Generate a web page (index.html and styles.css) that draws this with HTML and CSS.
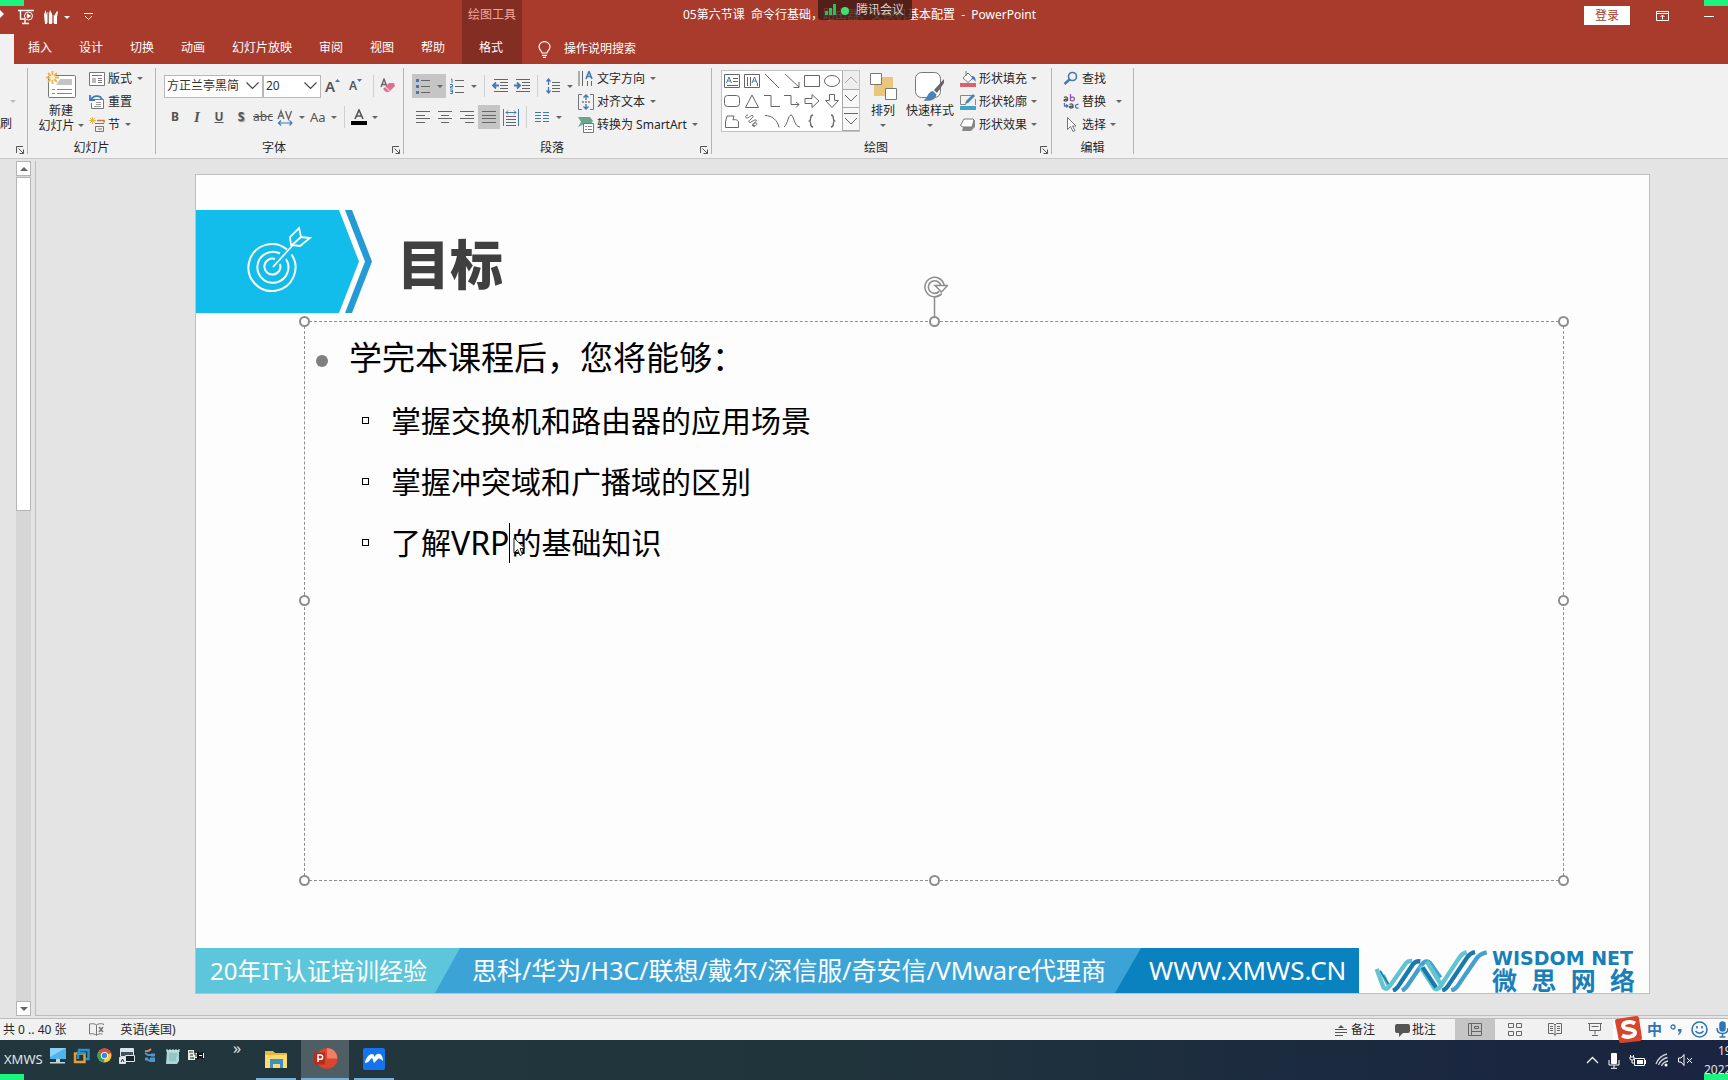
FILE: index.html
```html
<!DOCTYPE html>
<html lang="zh-CN">
<head>
<meta charset="utf-8">
<title>05第六节课 - PowerPoint</title>
<link rel="stylesheet" href="styles.css">
</head>
<body>
<i class="mark tl"></i><i class="mark tr"></i><i class="mark bl"></i><i class="mark br"></i>

<header class="header">
  <div class="head-left">
    <div class="quick">
      <svg width="5" height="12" viewBox="0 0 5 12"><path d="M0 2l4 4-4 4z" fill="#fff"/></svg>
      <button class="q-show" aria-label="从头开始"><svg width="18" height="16" viewBox="0 0 18 16" fill="none" stroke="#fff"><path d="M1 1.500h16M3.500 2v8h5M5 14.500h7M8 11v3" stroke-width="1.400"/><circle cx="11.500" cy="7" r="4"/><path d="M10.300 5l3.200 2-3.200 2z" fill="#fff"/></svg></button>
      <button class="q-pens" aria-label="画笔"><svg width="16" height="16" viewBox="0 0 16 16" fill="#fff"><path d="M1 6l1.500-5L4 6v9H2zM6 5l1-4 2 4v10H6zM11 7l3-5 1 1-1 5v7h-3z"/><path d="M4.800 3v11M10 6v8" stroke="#fff" stroke-width=".7"/></svg></button>
      <i class="caret"></i>
      <button class="q-more" aria-label="自定义"><svg width="9" height="8" viewBox="0 0 9 8" fill="none" stroke="#fff"><path d="M0 .5h9M1 3l3.500 3.500L8 3"/></svg></button>
    </div>
    <nav class="tabs">
      <a class="tab-active" href="#" aria-label="开始"></a>
      <a href="#">插入</a><a href="#">设计</a><a href="#">切换</a><a href="#">动画</a><a href="#">幻灯片放映</a><a href="#">审阅</a><a href="#">视图</a><a href="#">帮助</a>
    </nav>
  </div>
  <div class="context"><span>绘图工具</span><a href="#">格式</a></div>
  <div class="head-right">
    <div class="titlebar">
      <div class="title">05第六节课  命令行基础，路由器、交换机基本配置  -  PowerPoint
        <div class="meeting"><svg width="24" height="12" viewBox="0 0 24 12"><path d="M0 7h3v4H0zM4 4h3v7H4zM8 0h3v11H8z" fill="#22c55a"/><circle cx="20" cy="7" r="4" fill="#3fe070"/></svg>腾讯会议</div>
      </div>
      <div class="window-tools">
        <button class="login">登录</button>
        <button aria-label="功能区选项"><svg width="13" height="10" viewBox="0 0 13 10" fill="none" stroke="#fff"><path d="M.5.5h12v9H.5zM.5 2.500h12M6.500 8.500V4M4.500 6l2-2 2 2"/></svg></button>
        <button aria-label="最小化"><svg width="10" height="10" viewBox="0 0 10 10"><path d="M0 5.500h10" stroke="#fff"/></svg></button>
      </div>
    </div>
    <a class="tell" href="#"><svg width="13" height="17" viewBox="0 0 13 17" fill="none" stroke="#fff" stroke-width="1.200"><path d="M4 12c0-2-3-3-3-6.200a5.500 5.200 0 0 1 11 0C12 9 9 10 9 12zM4 14.300h5M5 16.300h3"/></svg>操作说明搜索</a>
  </div>
</header>

<section class="ribbon">
  <div class="group clip">
    <div class="content"><i class="caret pale"></i><span>刷</span></div>
    <div class="foot"><span></span><button class="launch" aria-label="剪贴板"><svg width="8" height="8" viewBox="0 0 8 8"><use href="#launch"/></svg></button></div>
  </div>

  <div class="group slides">
    <div class="content">
      <button class="big new"><svg width="31" height="28" viewBox="0 0 31 28"><rect x="2.500" y="4.500" width="27" height="22" rx="1" fill="#fff" stroke="#777"/><path d="M14 8h12v6H10z" fill="#c4c4c4"/><path d="M6 18.500h3m2 0h15M6 22.500h3m2 0h15" stroke="#888"/><path d="M6.500 0v13M0 6.500h13M2 2l9 9M11 2l-9 9" stroke="#e6b559" stroke-width="1.800"/><circle cx="6.500" cy="6.500" r="2.500" fill="#fff0c8"/></svg><span>新建</span><span>幻灯片<i class="caret"></i></span></button>
      <div class="stack">
        <button><svg width="16" height="16" viewBox="0 0 16 16" fill="none" stroke="#777"><path d="M.5 1.500h15v13H.5z" fill="#fff"/><path d="M3 4.500h10"/><path d="M3 7h4v5H3z" fill="#bbb" stroke="none"/><path d="M9 7.500h4M9 9.500h4M9 11.500h4"/></svg>版式<i class="caret"></i></button>
        <button><svg width="16" height="16" viewBox="0 0 16 16" fill="none"><path d="M4.500 5.500h10v9h-12V9" stroke="#777" fill="#fff"/><path d="M7 8.500h5M7 10.500h5M5 12.500h7" stroke="#999"/><path d="M2 6c2-5 9-5 11-1M1 1v5h5" stroke="#3f79b5" stroke-width="1.800"/></svg>重置</button>
        <button><svg width="16" height="16" viewBox="0 0 16 16" fill="none"><path d="M8 3.500h7v2" stroke="#d6743b" stroke-width="1.600"/><path d="M6 6.500h9M6.500 9.500h8v5h-8zM9 12h4" stroke="#777"/><path d="M3.500 0v7M0 3.500h7M1 1l5 5M6 1L1 6" stroke="#e6b559"/></svg>节<i class="caret"></i></button>
      </div>
    </div>
    <div class="foot"><span>幻灯片</span></div>
  </div>

  <div class="group font">
    <div class="content">
      <div class="row">
        <label class="combo face"><select aria-label="字体"><option>方正兰亭黑简</option></select><svg width="13" height="8" viewBox="0 0 13 8"><path d="M.5.5l6 6 6-6" fill="none" stroke="#444" stroke-width="1.200"/></svg></label>
        <label class="combo size"><select aria-label="字号"><option>20</option></select><svg width="13" height="8" viewBox="0 0 13 8"><path d="M.5.5l6 6 6-6" fill="none" stroke="#444" stroke-width="1.200"/></svg></label>
        <button class="grow" aria-label="增大字号">A<svg width="5" height="16" viewBox="0 0 5 16"><path d="M0 4l2.500-3L5 4z" fill="#3f79b5"/></svg></button>
        <button class="shrink" aria-label="减小字号">A<svg width="5" height="16" viewBox="0 0 5 16"><path d="M0 1l2.500 3L5 1z" fill="#3f79b5"/></svg></button>
        <i class="sep"></i>
        <button class="clear" aria-label="清除格式"><svg width="16" height="16" viewBox="0 0 16 16"><path d="M1 9L4 1l3 8M2 6.500h4" fill="none" stroke="#666" stroke-width="1.400"/><path d="M3 11l6-6 5 0 1 3-6 6-3 0z" fill="#e0708f"/><path d="M5 8.500l4.500 4.500" stroke="#fff"/></svg></button>
      </div>
      <div class="row fmt">
        <button class="cell"><b>B</b></button><button class="cell"><i class="ital">I</i></button><button class="cell"><u>U</u></button><button class="cell shadow">S</button><button class="cell"><s>abc</s></button>
        <button class="drop"><svg width="17" height="17" viewBox="0 0 17 17" fill="none"><path d="M1 10L4 2l3 8M2 7h4M8.500 2l3 8 3-8" stroke="#666" stroke-width="1.400"/><path d="M1 14h14M4 11.500L1.500 14 4 16.500M12.500 11.500L15 14l-2.500 2.500" stroke="#4477b5" stroke-width="1.200"/></svg><i class="caret"></i></button>
        <button class="drop aa">Aa<i class="caret"></i></button>
        <i class="sep"></i>
        <button class="drop"><svg width="16" height="17" viewBox="0 0 16 17"><path d="M4 10L8 1l4 9M5.500 7h5" fill="none" stroke="#555" stroke-width="1.600"/><path d="M0 12h16v4H0z"/></svg><i class="caret"></i></button>
      </div>
    </div>
    <div class="foot"><span>字体</span><button class="launch" aria-label="字体设置"><svg width="8" height="8" viewBox="0 0 8 8"><use href="#launch"/></svg></button></div>
  </div>

  <div class="group para">
    <div class="content">
      <div class="para-tools">
        <div class="row">
          <button class="drop on"><svg width="14" height="16" viewBox="0 0 14 16"><path d="M0 1h3v3H0zM0 7h3v3H0zM0 13h3v3H0z" fill="#4477b5"/><path d="M5 2.500h9M5 8.500h9M5 14.500h9" stroke="#666"/></svg><i class="caret"></i></button>
          <button class="drop"><svg width="14" height="16" viewBox="0 0 14 16"><path d="M1 1h1v4M0 6.500h2.500v2H.5v1.500h2.500M0 12h2.500v3.500H0M.5 13.500h2" stroke="#4477b5" fill="none"/><path d="M5 2.500h9M5 8.500h9M5 14.500h9" stroke="#666"/></svg><i class="caret"></i></button>
          <i class="sep"></i>
          <button class="cell" aria-label="减少缩进"><svg width="16" height="14" viewBox="0 0 16 14"><path d="M2 .5h14M8 3.500h8M8 6.500h8M8 9.500h8M2 12.500h14" stroke="#666"/><path d="M7 6.500H1M4 3.500l-3 3 3 3" stroke="#4477b5" stroke-width="1.800" fill="none"/></svg></button>
          <button class="cell" aria-label="增加缩进"><svg width="16" height="14" viewBox="0 0 16 14"><path d="M2 .5h14M8 3.500h8M8 6.500h8M8 9.500h8M2 12.500h14" stroke="#666"/><path d="M0 6.500h6M3 3.500l3 3-3 3" stroke="#4477b5" stroke-width="1.800" fill="none"/></svg></button>
          <i class="sep"></i>
          <button class="drop"><svg width="14" height="16" viewBox="0 0 14 16"><path d="M6 4.500h8M6 7.500h8M6 10.500h8M6 13.500h8" stroke="#666"/><path d="M2.500 1v6M.5 3.500l2-2.500 2 2.500M2.500 9v6M.5 12.500l2 2.500 2-2.500" stroke="#4477b5" stroke-width="1.300" fill="none"/></svg><i class="caret"></i></button>
        </div>
        <div class="row">
          <button class="cell" aria-label="左对齐"><svg width="14" height="12" viewBox="0 0 14 12"><path d="M0 .5h14M0 4.500h9M0 7.500h14M0 11.500h9" stroke="#666"/></svg></button>
          <button class="cell" aria-label="居中"><svg width="14" height="12" viewBox="0 0 14 12"><path d="M0 .5h14M3 4.500h8M0 7.500h14M3 11.500h8" stroke="#666"/></svg></button>
          <button class="cell" aria-label="右对齐"><svg width="14" height="12" viewBox="0 0 14 12"><path d="M0 .5h14M5 4.500h9M0 7.500h14M5 11.500h9" stroke="#666"/></svg></button>
          <button class="cell on" aria-label="两端对齐"><svg width="14" height="12" viewBox="0 0 14 12"><path d="M0 .5h14M0 4.500h14M0 7.500h14M0 11.500h14" stroke="#666"/></svg></button>
          <button class="cell" aria-label="分散对齐"><svg width="16" height="17" viewBox="0 0 16 17"><path d="M.5 0v17M15.500 0v17M3 3.500h10M5 1.500l-2 2 2 2M11 1.500l2 2-2 2" stroke="#4477b5" fill="none"/><path d="M3 7.500h10M3 10.500h10M3 13.500h10M3 16.500h10" stroke="#666"/></svg></button>
          <i class="sep"></i>
          <button class="drop"><svg width="14" height="12" viewBox="0 0 14 12"><path d="M0 1.500h6M8 1.500h6M0 4.500h6M8 4.500h6M0 7.500h6M8 7.500h6M0 10.500h6M8 10.500h6" stroke="#4477b5"/></svg><i class="caret"></i></button>
        </div>
      </div>
      <div class="stack">
        <button><svg width="16" height="16" viewBox="0 0 16 16" fill="none"><path d="M1 0v15M4.500 0v15M9.500 10v5M13.500 10v5" stroke="#666"/><path d="M8 8l3-7.500L14 8M9 5.500h4" stroke="#4477b5" stroke-width="1.600"/></svg>文字方向<i class="caret"></i></button>
        <button><svg width="16" height="16" viewBox="0 0 16 16" fill="none"><path d="M4 .5H.5v15H4M12 .5h3.500v15H12" stroke="#777"/><path d="M4 8h8" stroke="#999" stroke-width="2" stroke-dasharray="2 1"/><path d="M8 1v5M5.500 3.500L8 1l2.500 2.500M8 15v-5M5.500 12.500L8 15l2.500-2.500" stroke="#4477b5" stroke-width="1.400"/></svg>对齐文本<i class="caret"></i></button>
        <button><svg width="16" height="16" viewBox="0 0 16 16"><path d="M0 0h12l3 4-2 3H6L0 10l3-5z" fill="#6aa58c"/><path d="M5.500 6.500h10v9h-10z" fill="#fff" stroke="#777"/><path d="M7 9.500h2m1 0h4M7 12.500h2m1 0h4" stroke="#888"/></svg>转换为 SmartArt<i class="caret"></i></button>
      </div>
    </div>
    <div class="foot"><span>段落</span><button class="launch" aria-label="段落设置"><svg width="8" height="8" viewBox="0 0 8 8"><use href="#launch"/></svg></button></div>
  </div>

  <div class="group draw">
    <div class="content">
      <div class="gallery">
        <div class="shapes">
          <button><svg width="16" height="14" viewBox="0 0 16 14"><path d="M.5.5h15v13H.5z"/><path d="M2.500 9L5 3l2.500 6M3.500 7h3" stroke="#4477b5"/><path d="M9 4.500h5M9 7.500h5M3 11.500h11"/></svg></button>
          <button><svg width="16" height="14" viewBox="0 0 16 14"><path d="M.5.5h15v13H.5z"/><path d="M8 9l2.500-6L13 9M9 7h3" stroke="#4477b5"/><path d="M3.500 3v9M6.500 3v9M13.500 9v3"/></svg></button>
          <button><svg width="16" height="14" viewBox="0 0 16 14"><path d="M1 0l14 14"/></svg></button>
          <button><svg width="16" height="14" viewBox="0 0 16 14"><path d="M1 0l14 13M15 8v5.500H9.500"/></svg></button>
          <button><svg width="16" height="14" viewBox="0 0 16 14"><path d="M.5 1.500h15v11H.5z"/></svg></button>
          <button><svg width="16" height="14" viewBox="0 0 16 14"><ellipse cx="8" cy="7" rx="7.500" ry="5.500"/></svg></button>
          <button><svg width="16" height="14" viewBox="0 0 16 14"><rect x=".5" y="1.500" width="15" height="11" rx="3"/></svg></button>
          <button><svg width="16" height="14" viewBox="0 0 16 14"><path d="M8 1l6.500 12.500h-13z"/></svg></button>
          <button><svg width="16" height="14" viewBox="0 0 16 14"><path d="M0 1.500h7v11h9"/></svg></button>
          <button><svg width="16" height="14" viewBox="0 0 16 14"><path d="M0 1.500h7v9h8M12 8l3 2.500-3 3"/></svg></button>
          <button><svg width="16" height="14" viewBox="0 0 16 14"><path d="M1 4.500h7V.5L15 7l-7 6.500v-4H1z"/></svg></button>
          <button><svg width="16" height="14" viewBox="0 0 16 14"><path d="M5.500.5h5v6h4L8 13.500 1.500 6.500h4z"/></svg></button>
          <button><svg width="16" height="14" viewBox="0 0 16 14"><path d="M3 2h7L9 6c2-1 6 0 5.500 3v4.500h-13V8z"/></svg></button>
          <button><svg width="16" height="14" viewBox="0 0 16 14"><path d="M4 1C1 1 1 4 3 4s5-4 6-2-5 4-4 6 5-3 7-2-3 3-3 5 4 0 4-1-3-2-4 0 0 3 2 2"/></svg></button>
          <button><svg width="16" height="14" viewBox="0 0 16 14"><path d="M1 1.500c7 0 13 5 14 12"/></svg></button>
          <button><svg width="16" height="14" viewBox="0 0 16 14"><path d="M0 13C4 10 4 1 7 1s3 12 9 12"/></svg></button>
          <button><svg width="16" height="14" viewBox="0 0 16 14"><path d="M9 1C5 1 8 6 5.500 7 8 8 5 13 9 13" stroke-width="1.300"/></svg></button>
          <button><svg width="16" height="14" viewBox="0 0 16 14"><path d="M7 1c4 0 1 5 3.500 6C8 8 11 13 7 13" stroke-width="1.300"/></svg></button>
        </div>
        <div class="gscroll">
          <button class="off" aria-label="上一行"><svg width="14" height="8" viewBox="0 0 14 8"><path d="M1 7l6-6 6 6"/></svg></button>
          <button aria-label="下一行"><svg width="14" height="8" viewBox="0 0 14 8"><path d="M1 1l6 6 6-6"/></svg></button>
          <button aria-label="其他"><svg width="14" height="12" viewBox="0 0 14 12"><path d="M0 .5h14M1 5l6 6 6-6"/></svg></button>
        </div>
      </div>
      <button class="big"><svg width="28" height="28" viewBox="0 0 28 28"><path d="M13 5h11v11H13zM5 13h11v11H5z" fill="#ebc57c"/><path d="M1.500 1.500h11v11h-11zM16.500 16.500h11v11h-11z" fill="#fff" stroke="#777"/></svg><span>排列</span><i class="caret"></i></button>
      <button class="big wide"><svg width="30" height="30" viewBox="0 0 30 30"><rect x=".500" y="1.500" width="25" height="25" rx="6" fill="#fff" stroke="#777"/><path d="M29 8L19 19l3 3 7-10z" fill="#666"/><path d="M18 20l3.500 3.500c-1 6-7 7-13 6 4-2 4-9 9.500-9.500z" fill="#4d81b8"/></svg><span>快速样式</span><i class="caret"></i></button>
      <div class="stack">
        <button><svg width="16" height="16" viewBox="0 0 16 16"><path d="M3 7l5-5 5 5-5 4.500z" fill="#fff" stroke="#777"/><path d="M6 5V0" stroke="#777"/><path d="M12 5c3 0 4 3 3.500 6-1-2-2-3-4-3z" fill="#4477b5"/><path d="M0 12h16v4H0z" fill="#d9636b"/></svg>形状填充<i class="caret"></i></button>
        <button><svg width="16" height="16" viewBox="0 0 16 16"><path d="M12 1.500H.5v9H6M15.500 5v6" fill="none" stroke="#888"/><path d="M5 10l1-3 7-7 2 2-7 7z" fill="#4d81b8"/><path d="M0 12h16v4H0z" fill="#3fa5c5"/></svg>形状轮廓<i class="caret"></i></button>
        <button><svg width="16" height="16" viewBox="0 0 16 16"><path d="M5 3h10v7l-4 4H2z" fill="#888"/><path d="M4 2h9l1 1-2 7H3L.5 8.500z" fill="#fff" stroke="#777"/></svg>形状效果<i class="caret"></i></button>
      </div>
    </div>
    <div class="foot"><span>绘图</span><button class="launch" aria-label="绘图设置"><svg width="8" height="8" viewBox="0 0 8 8"><use href="#launch"/></svg></button></div>
  </div>

  <div class="group edit">
    <div class="content"><div class="stack">
      <button><svg width="16" height="16" viewBox="0 0 16 16" fill="none" stroke="#4477b5"><circle cx="9.500" cy="5.500" r="4" stroke-width="1.600"/><path d="M6.500 8.500L1.500 13" stroke-width="2.400"/></svg>查找</button>
      <button><svg width="16" height="16" viewBox="0 0 16 16" fill="none" stroke-width="1.300"><path d="M1 3.500c2-1 3.500-.5 3.500 1V7M4.500 5C2 5 1 5.500 1 6.300S4 7.500 4.500 6" stroke="#555"/><path d="M7.500 0v7M7.500 4c1-1.500 4-1 4 1s-3 2.500-4 1" stroke="#8e55a8"/><path d="M1.500 9v3h3M3.200 10.500L5 12l-1.800 1.500" stroke="#4477b5"/><path d="M6.500 10.500c2-1 3.500-.5 3.500 1V14M10 12c-2.500 0-3.500.5-3.500 1.300S9.500 14.500 10 13" stroke="#555"/><path d="M15.500 10.500c-4-1-4 4.500 0 3.500" stroke="#4477b5"/></svg>替换<i class="caret far"></i></button>
      <button><svg width="16" height="16" viewBox="0 0 16 16"><path d="M4.500.5v12l3-3 2.500 5 2-1-2.500-4.500h3.500z" fill="#fff" stroke="#777"/></svg>选择<i class="caret"></i></button>
    </div></div>
    <div class="foot"><span>编辑</span></div>
  </div>
  <svg class="defs" width="0" height="0"><defs><g id="launch" fill="none" stroke="#555"><path d="M.5 7V.500H7M2.500 2.500l5 5M7.500 3.500v4h-4"/></g></defs></svg>
</section>

<main class="work">
  <div class="scroll">
    <button aria-label="向上"><i class="tri up"></i></button>
    <div class="thumb"></div>
    <div class="track"></div>
    <button aria-label="向下"><i class="tri"></i></button>
  </div>
  <div class="stage">
    <article class="slide">
      <div class="banner">
        <svg width="176" height="103" viewBox="0 0 176 103"><path d="M0 0h143l20 51.500L143 103H0z" fill="#12bdec"/><path d="M149 0h7l20 51.500-20 51.500h-7l20-51.500z" fill="#259bd6"/><g fill="none" stroke="#fff" stroke-width="2" transform="translate(-3 -1)"><path d="M98.500 45.500A23.500 23.500 0 1 1 94 40.500M93 50a15.500 15.500 0 1 1-6-5.500M87 55a8 8 0 1 1-5-5"/><path d="M80 58L99 37M98 36l-1-8 9-9 2 9-9 8zM99 36l8 1 10-8-9-1z" stroke-width="1.800"/></g></svg>
        <h1>目标</h1>
      </div>
      <div class="textbox">
        <svg class="rotate" width="26" height="46" viewBox="0 0 26 46" fill="none" stroke="#8c8c8c"><path d="M12.500 20v25" stroke-width="1.500"/><path d="M18.500 16.500a8 8 0 1 1 2-7" stroke-width="5"/><path d="M18.500 16.500a8 8 0 1 1 2-7" stroke="#fff" stroke-width="1.800"/><path d="M13 9.500h12.500l-6 6.500z" fill="#fff" stroke-width="1.500"/></svg>
        <i class="h n w"></i><i class="h n c"></i><i class="h n e"></i><i class="h m w"></i><i class="h m e"></i><i class="h s w"></i><i class="h s c"></i><i class="h s e"></i>
        <p>学完本课程后，您将能够：</p>
        <ul>
          <li>掌握交换机和路由器的应用场景</li>
          <li>掌握冲突域和广播域的区别</li>
          <li>了解<span class="latin">VRP</span><span class="cursor"><svg width="13" height="20" viewBox="0 0 13 20"><path d="M1 1v15l3.500-3.500L7 18.500l2.500-1L7 11.500h5z" fill="#fff" stroke="#222"/></svg></span>的基础知识</li>
        </ul>
      </div>
      <footer class="brand">
        <div class="b1">20年IT认证培训经验</div>
        <div class="b2">思科/华为/H3C/联想/戴尔/深信服/奇安信/VMware代理商</div>
        <div class="b3">WWW.XMWS.CN</div>
        <div class="logo">
          <svg width="114" height="42" viewBox="192 86 342 126" fill="none" stroke-width="13"><path d="M200 143l22 55q5 10 15 3M212 150l20 42M222 160l12 26" stroke="#5bbccb" stroke-width="6"/><path d="M210 148l28 44" stroke="#1979ae" stroke-width="5"/><path d="M200 143l20 54q8 12 20-4l48-68q6-7 18-6" stroke="#62c3d1"/><path d="M249 208q10-4 15-12l45-67q8-11 22-9" stroke="#1979ae"/><path d="M276 208q8-4 14-12l46-67q14-18 28 1l27 39" stroke="#45a0cf"/><path d="M350 120l42 68" stroke="#62c3d1"/><path d="M330 134l42 65q8 11 18-2l58-88q7-12 22-17" stroke="#62c3d1"/><path d="M338 138l40 60" stroke="#1979ae"/><path d="M397 208q10-4 16-13l58-86q8-13 24-17" stroke="#1979ae"/><path d="M424 208q12-4 18-13l58-84q10-14 30-18" stroke="#45a0cf"/></svg>
          <div class="name"><strong>WISDOM NET</strong><div class="cn"><span>微</span><span>思</span><span>网</span><span>络</span></div></div>
        </div>
      </footer>
    </article>
  </div>
</main>

<footer class="status">
  <span class="pages">共 0 .. 40 张</span>
  <svg class="book" width="15" height="13" viewBox="0 0 15 13" fill="none" stroke="#777"><path d="M7.500 2v10.500M7.500 2C6 .500 3 .500.500 1v10c2.500-.5 5.500-.5 7 1.500M7.500 2C9 .500 12 .500 14.500 1v1M7.500 12.500c1-1.500 3-2 6-1.500"/><path d="M10 4l4 5M14 4l-4 5" stroke-width="1.600"/></svg>
  <span class="lang">英语(美国)</span>
  <div class="views">
    <button class="notes"><svg width="12" height="12" viewBox="0 0 12 12"><path d="M3 4l3-3 3 3z" fill="#555"/><path d="M0 5.500h12M0 8.500h12M0 11.500h8" stroke="#555"/></svg>备注</button>
    <button class="comments"><svg width="15" height="14" viewBox="0 0 15 14"><path d="M2 1h11q2 0 2 2v5q0 2-2 2H8l-4 4v-4H2q-2 0-2-2V3q0-2 2-2z" fill="#555"/></svg>批注</button>
    <button class="view on" aria-label="普通视图"><svg width="14" height="13" viewBox="0 0 14 13" fill="none" stroke="#666"><path d="M.5.500h13v12H.500zM3.500.500v12M3.500 8.500h10M6.500 3.500h4v2h-4z"/></svg></button>
    <button class="view" aria-label="幻灯片浏览"><svg width="14" height="13" viewBox="0 0 14 13" fill="none" stroke="#666"><path d="M.5.500h5v4h-5zM8.500.500h5v4h-5zM.500 8.500h5v4h-5zM8.500 8.500h5v4h-5z"/></svg></button>
    <button class="view" aria-label="阅读视图"><svg width="14" height="13" viewBox="0 0 14 13" fill="none" stroke="#666"><path d="M.5.500h5L7 2 8.500.500h5v10h-5L7 12.500 5.500 10.500h-5zM7 2v10M2 3.500h3M2 5.500h3M2 7.500h3M9 3.500h3M9 5.500h3M9 7.500h3"/></svg></button>
    <button class="view" aria-label="放映"><svg width="14" height="13" viewBox="0 0 14 13" fill="none" stroke="#666"><path d="M0 .500h14M1.500 1v6.500h11V1M3.500 3.500h7M7 7.500v4M4 12.500h6"/></svg></button>
  </div>
  <div class="ime">
    <svg class="sogou" width="30" height="30" viewBox="0 0 30 30"><path d="M2 6q0-2 2-2l19-3q3 0 3 2l3 20q0 2-2 3L9 28q-3 0-3-2z" fill="#d8452c"/><path d="M22 8.500c-5-3-12-1-12 2.500 0 4.500 12 2 12 6.500 0 3.500-7 6-13 3" fill="none" stroke="#fff" stroke-width="4"/></svg>
    <span>中</span>
    <svg width="13" height="12" viewBox="0 0 13 12"><circle cx="3" cy="3" r="2" fill="none" stroke="#2f74b5" stroke-width="1.300"/><path d="M8 5h3.500c.5 3-1 5-3 6l-.5-1c1-.7 1.500-1.500 1.500-2.500H8z" fill="#2f74b5"/></svg>
    <svg width="17" height="17" viewBox="0 0 17 17" fill="none" stroke="#2f74b5" stroke-width="1.600"><circle cx="8.500" cy="8.500" r="7.500"/><path d="M6 5v2.500M11 5v2.500M4.500 10q4 4.500 8 0"/></svg>
    <svg width="13" height="17" viewBox="0 0 13 17" fill="none" stroke="#2f74b5" stroke-width="1.500"><rect x="4" y="1" width="5" height="9" rx="2.500" fill="#2f74b5"/><path d="M1 7q0 5.500 5.500 5.500T12 7M6.500 12v4M3.500 16h6"/></svg>
  </div>
</footer>

<div class="taskbar">
  <span class="deskname">XMWS</span>
  <div class="launchers">
    <svg width="17" height="16" viewBox="0 0 17 16"><path d="M1 0h16v11H1z" fill="#4db4ec"/><path d="M1 0h16L1 9z" fill="#8ad2f7"/><path d="M7 11h4v3H7zM1 14h15v1.500H1z" fill="#c5d3da"/></svg>
    <svg width="17" height="16" viewBox="0 0 17 16" fill="none" stroke-width="2.400"><path d="M6 5V2h9.500v9H12" stroke="#2395d2"/><path d="M2 5.500h9.500V14H2z" stroke="#ef9a2d"/><path d="M5 11V5h7" stroke="#2395d2"/></svg>
    <svg width="15" height="15" viewBox="0 0 15 15"><circle cx="7.500" cy="7.500" r="7" fill="#f5c838"/><path d="M7.500 7.500L1.500 4A7 7 0 0 1 14 5z" fill="#df4b3b"/><path d="M7.500 7.500L1.500 4A7 7 0 0 0 7 14.500z" fill="#37a457"/><circle cx="7.500" cy="7.500" r="3.600" fill="#fff"/><circle cx="7.500" cy="7.500" r="2.700" fill="#4381e5"/></svg>
    <svg width="16" height="16" viewBox="0 0 16 16" fill="none" stroke="#dce4e8"><path d="M1.500.500h13v8h-13z" fill="#41545d"/><path d="M2 2.500h12" stroke-width="3"/><path d="M6.500 7.500h9v6h-9z" fill="#17242a"/><path d="M.500 9.500h6v6h-6z" fill="#eee"/><path d="M2 14l1.500-3L5 14" stroke="#222"/></svg>
    <svg width="16" height="16" viewBox="0 0 16 16" fill="none" stroke-width="2"><path d="M3 3q3 1 6-2" stroke="#c98b6a"/><path d="M3 5l3 2h3M5 11l3 2h5" stroke="#4b96ca"/><path d="M9 7h4M3 11h3M8 11h5" stroke="#4b96ca" stroke-width="3"/></svg>
    <svg width="15" height="16" viewBox="0 0 15 16"><path d="M2 2h12v11l-2 3H1z" fill="#a9d6d6"/><path d="M2 1v3M5 1v3M8 1v3M11 1v3M14 1v3" stroke="#eee"/><path d="M4 6h8M4 8h8M4 10h7M4 12h7" stroke="#6fa9ad" stroke-width=".7"/></svg>
    <svg width="17" height="13" viewBox="0 0 17 13"><path d="M1 1h6v3h5v5H8v2H1z" fill="#e7ebe8"/><path d="M2 3h4M3 6h3M7 5h2v3M3 9h3" fill="none" stroke="#333"/><path d="M11 3v7M13 4v5M15.500 3v7" stroke="#111" stroke-width="2"/><path d="M12 6.500h3M16.500 4v5" stroke="#fff"/><path d="M5 8h2v2H5z" fill="#4a9a51"/></svg>
  </div>
  <span class="more">»</span>
  <div class="apps">
    <button class="app" aria-label="资源管理器"><svg width="24" height="22" viewBox="0 0 24 22"><path d="M1 3h8l2 2h12v15H1z" fill="#e9b83d"/><path d="M1 7h22v13H1z" fill="#fbdc70"/><path d="M6 11h13v9h-3v-4h-7v4H6z" fill="#3f8fc2"/></svg></button>
    <button class="app on" aria-label="PowerPoint"><svg width="26" height="24" viewBox="0 0 26 24"><circle cx="15" cy="11.500" r="10.500" fill="#d9452d"/><path d="M15 1a10.500 10.500 0 0 1 10.500 10.500H15z" fill="#f08065"/><path d="M2 5.500h11v12H2z" fill="#b52d1c"/><path d="M6 15V8h2.500a2 2 0 0 1 0 4.300H6" fill="none" stroke="#fff" stroke-width="1.500"/></svg></button>
    <button class="app" aria-label="腾讯会议"><svg width="22" height="22" viewBox="0 0 22 22"><rect width="22" height="22" rx="2" fill="#1673f0"/><path d="M2 15c0-4 4-9 7-9 2 0 2 2 2 3 2-3 4-4 6-3 2 1 3 4 3 7-2-2-4-3-5-2l-4 4c-1-2-1-4-2-5-2 1-3 5-7 5z" fill="#fff"/></svg></button>
  </div>
  <div class="tray">
    <svg width="13" height="8" viewBox="0 0 13 8"><path d="M1 7l5.500-5.500L12 7" fill="none" stroke="#fff" stroke-width="1.300"/></svg>
    <svg width="12" height="17" viewBox="0 0 12 17"><rect x="3" y="1" width="6" height="11" rx="1" fill="#fff"/><path d="M1 8v5h10V8M6 13v3M3 16.300h6" fill="none" stroke="#fff"/></svg>
    <svg width="17" height="13" viewBox="0 0 17 13"><path d="M5.500 4.500h10v7h-10z" fill="none" stroke="#fff"/><path d="M8 6h6v4H8zM16 6h1v4h-1z" fill="#fff"/><path d="M1 3h4v2q0 1-2 1T1 5zM1.500 1v2M4.500 1v2M3 6v3h2" fill="none" stroke="#fff"/></svg>
    <svg width="14" height="14" viewBox="0 0 14 14" fill="none" stroke="#cdd3da" stroke-width="1.300"><path d="M1 11Q4 3 12 1M3.500 12Q6 6 12.500 4.500M6.500 13Q8 9 13 8"/><circle cx="11" cy="12" r="1.500" fill="#fff" stroke="none"/></svg>
    <svg width="15" height="12" viewBox="0 0 15 12" fill="none" stroke="#fff"><path d="M.5 4h2.500l3-3.500v11L3 8H.500zM9 4l5 5M14 4L9 9"/></svg>
    <div class="clock"><span class="time">19</span><span>2022</span></div>
  </div>
</div>
</body>
</html>
```
FILE: styles.css
```css
*, *::before { box-sizing: border-box; }

body {
  margin: 0;
  min-height: 100vh;
  display: flex;
  flex-direction: column;
  position: relative;
  overflow-x: hidden;
  background: #e4e4e4;
  color: #262626;
  font: 12px/16px "Noto Sans", "Noto Sans CJK SC", sans-serif;
}

button {
  display: flex;
  align-items: center;
  padding: 0;
  border: 0;
  background: none;
  color: inherit;
  font: inherit;
  white-space: nowrap;
}
a { color: inherit; text-decoration: none; }
svg { display: block; flex: none; }
.defs { position: absolute; }

/* Screen-share corner marks */
.mark { position: absolute; z-index: 5; width: 24px; height: 6px; background: #1cf57d; }
.tl { top: 0; left: 0; }
.tr { top: 0; right: 0; }
.bl { bottom: 0; left: 0; }
.br { bottom: 0; right: 0; }

.caret {
  width: 0;
  height: 0;
  margin-left: 5px;
  border: 3px solid transparent;
  border-top-color: #666;
  border-bottom: 0;
  flex: none;
}
.caret.pale { border-top-color: #bbb; margin: 0; }

/* Header */
.header { display: flex; height: 64px; background: #a93b2c; color: #fff; }
.head-left { display: flex; flex-direction: column; width: 462px; }
.quick { display: flex; align-items: center; height: 34px; }
.quick > svg { margin-top: -6px; }
.q-show { margin-left: 12px; }
.q-pens { margin-left: 8px; }
.quick .caret { border-top-color: #fff; }
.q-more { margin-left: 14px; }
.tabs { display: flex; height: 30px; }
.tabs a { padding: 0 13px 0 14px; line-height: 28px; white-space: nowrap; }
.tabs .tab-active { width: 14px; padding: 0; background: #f1f1f1; }
.context { display: flex; flex-direction: column; width: 60px; text-align: center; background: #832d23; }
.context span { height: 34px; line-height: 30px; color: #f3a497; }
.context a { line-height: 28px; padding-right: 2px; }
.head-right { flex: 1; }
.titlebar { display: flex; justify-content: space-between; height: 34px; padding-left: 161px; }
.title { position: relative; line-height: 30px; white-space: pre; height: 30px; }
.meeting {
  position: absolute;
  top: 0;
  left: 135px;
  display: flex;
  gap: 7px;
  width: 94px;
  height: 20px;
  padding-left: 7px;
  align-items: center;
  background: rgba(66, 28, 22, .84);
  border-radius: 0 0 3px 3px;
  color: #d8cfcc;
  line-height: 20px;
}
.window-tools { display: flex; align-items: flex-start; gap: 26px; padding: 6px 14px 0 0; }
.window-tools button { height: 19px; }
.window-tools button:last-child { margin-left: 9px; }
.login { width: 46px; justify-content: center; background: #fff; color: #a93b2c; }
.tell { display: flex; align-items: center; gap: 13px; height: 30px; padding-left: 16px; }

/* Ribbon */
.ribbon { display: flex; height: 95px; padding: 3px 0 4px; background: #f1f1f1; border-bottom: 1px solid #c8c8c8; }
.group { display: flex; flex-direction: column; justify-content: space-between; border-right: 1px solid #b4b4b4; margin-top: 1px; }
.content { display: flex; height: 70px; margin-top: -1px; }
.foot { display: flex; height: 15px; line-height: 18px; }
.foot span { flex: 1; text-align: center; }
.launch { width: 11px; align-items: flex-end; }

.clip { width: 28px; }
.clip .content { flex-direction: column; justify-content: space-between; padding: 33px 0 5px; }
.clip .caret { margin-left: 10px; }
.slides { width: 128px; }
.font { width: 248px; }
.para { width: 308px; }
.draw { width: 340px; }
.edit { width: 82px; }

.stack { display: flex; flex-direction: column; }
.stack button { height: 23px; }
.stack svg { margin-right: 3px; }

.big { flex-direction: column; padding-top: 4px; width: 28px; }
.big svg { height: 30px; margin-bottom: 2px; }
.big span { display: flex; align-items: center; line-height: 15px; }
.big > .caret { margin: 6px 0 0; }
.big.new { width: 48px; margin: 0 4px 0 9px; }
.big.new svg { height: 28px; margin-bottom: 4px; }
.new .caret { margin-left: 3px; }
.big.wide { width: 48px; }

.row { display: flex; align-items: center; height: 24px; }
.sep { width: 1px; height: 22px; background: #d0d0d0; }
.cell { width: 22px; height: 24px; justify-content: center; color: #555; }
.drop { height: 24px; }
.on { background: #c5c5c5; }

.font .content { flex-direction: column; gap: 7px; padding: 7px 0 0 8px; }
.combo { display: grid; height: 23px; align-items: center; }
.combo select {
  grid-area: 1 / 1;
  width: 100%;
  height: 23px;
  padding: 0 2px;
  border: 1px solid #b8b8b8;
  border-radius: 0;
  background: #fff;
  color: #333;
  font: inherit;
  appearance: none;
}
.combo svg { grid-area: 1 / 1; justify-self: end; margin-right: 4px; }
.face { width: 99px; }
.size { width: 58px; }
.grow, .shrink { width: 23px; justify-content: center; color: #555; font-weight: 600; }
.grow { font-size: 15px; }
.row .sep { margin: 0 6px; }
.font .clear { margin-left: 0; }
.fmt .drop { width: 32px; }
.fmt .drop:nth-of-type(6) { padding-left: 3px; }
.fmt .aa { padding-left: 4px; font-size: 13px; color: #555; }
.ital { font-family: "Liberation Serif", serif; font-size: 15px; font-style: italic; font-weight: 700; }
.fmt u { font-weight: 700; }
.shadow { font-weight: 700; text-shadow: 1px 1px 1px #888; }

.para .content { padding-left: 8px; }
.para-tools { display: flex; flex-direction: column; gap: 7px; width: 166px; padding-top: 7px; }
.para-tools .sep { margin: 0 4px; }
.para-tools .drop { width: 34px; padding-left: 4px; }
.para-tools .drop .caret { margin-left: 7px; }

.draw .content { padding-left: 9px; }
.gallery { display: flex; width: 139px; height: 62px; margin: 3px 9px 0 0; border: 1px solid #c3c3c3; background: #fff; }
.shapes { display: grid; grid-template-columns: repeat(6, 20px); flex: 1; }
.shapes button { justify-content: center; }
.shapes svg, .gscroll svg { fill: none; stroke: #666; }
.gscroll { display: grid; width: 17px; }
.gscroll button { justify-content: center; border: 1px solid #aaa; border-width: 0 0 1px 1px; background: #f7f7f7; }
.gscroll .off { background: #eee; }
.gscroll .off svg { stroke: #aaa; }
.draw .wide { margin: 0 6px 0 9px; }
.draw .stack .caret { margin-left: 4px; }
.edit .content { padding-left: 11px; }
.edit .stack .caret { margin-left: 4px; }
.edit .stack .far { margin-left: 10px; }

/* Work area */
.work { flex: 1; display: flex; padding: 2px 0 0 16px; }
.scroll { display: flex; flex-direction: column; width: 15px; background: #d6d6d6; margin-bottom: 2px; }
.scroll button { justify-content: center; height: 15px; border: 1px solid #b5b5b5; background: #fff; }
.tri { border: 4px solid transparent; border-top-color: #666; border-bottom: 0; }
.tri.up { border: 4px solid transparent; border-bottom-color: #666; border-top: 0; }
.thumb { flex: 334; margin-top: 1px; border: 1px solid #b5b5b5; background: #fff; }
.track { flex: 492; }
.stage {
  flex: 1;
  display: flex;
  margin-left: 4px;
  margin-bottom: 2px;
  padding: 13px 78px 21px 159px;
  border: 1px solid #bcbcbc;
  border-width: 0 0 1px 1px;
}
.slide { flex: 1; display: flex; flex-direction: column; border: 1px solid #c0c0c0; background: #fdfdfd; }
.banner { display: flex; align-items: center; gap: 25px; margin-top: 35px; }
h1 { margin: 0; font: 900 53px/60px "Noto Sans CJK SC", sans-serif; color: #404040; }

.textbox {
  flex: 1;
  position: relative;
  margin: 8px 85px 67px 108px;
  padding: 4px 0 0 44px;
  border: 1px dashed #8f8f8f;
  color: #000;
}
.textbox p { display: flex; align-items: center; margin: 0; font-size: 33px; line-height: 64px; }
.textbox p::before { content: ""; width: 12px; height: 12px; margin: 6px 21px 0 -33px; border-radius: 50%; background: #7f7f7f; }
.textbox ul { margin: 0; padding: 0 0 0 41px; list-style: none; }
.textbox li { display: flex; align-items: center; font-size: 30px; line-height: 61px; }
.textbox li::before { content: ""; width: 7px; height: 7px; margin: 0 22px 0 -28px; border: 1px solid #000; }
.latin { font-size: 32px; }
.cursor { position: relative; width: 1px; height: 40px; margin-right: 1px; background: #000; }
.cursor svg { position: absolute; top: 14px; left: 4px; }

.h { position: absolute; width: 11px; height: 11px; border: 2px solid #8c8c8c; border-radius: 50%; background: #fff; }
.n { top: -6px; } .s { bottom: -6px; } .m { top: calc(50% - 6px); }
.w { left: -6px; } .e { right: -6px; } .c { left: calc(50% - 5px); }
.rotate { position: absolute; top: -46px; left: calc(50% - 12px); }

.brand { display: flex; height: 45px; color: #fff; font-size: 24px; line-height: 45px; white-space: nowrap; }
.b1 { width: 264px; padding-left: 14px; background: #5dc6db; }
.b2 { width: 706px; margin-left: -25px; padding-left: 37px; background: #3ca3d7; font-size: 25px; clip-path: polygon(25px 0, 100% 0, 100% 100%, 0 100%); }
.b3 { flex: 1; margin-left: -26px; padding-left: 34px; background: #0b82c0; font-size: 26px; clip-path: polygon(26px 0, 100% 0, 100% 100%, 0 100%); }
.logo { display: flex; align-items: center; width: 290px; padding-left: 15px; color: #197fb8; }
.name { width: 143px; margin-left: 4px; }
.name strong { display: block; font: 700 19px/20px "DejaVu Sans", sans-serif; }
.cn { display: flex; justify-content: space-between; font-size: 25px; font-weight: 700; line-height: 25px; }

/* Status bar */
.status { display: flex; align-items: center; position: relative; height: 22px; padding-left: 3px; background: #f1f1f1; border-top: 1px solid #bcbcbc; line-height: 21px; }
.book { margin-left: 22px; }
.lang { margin-left: 17px; }
.views { display: flex; margin-left: auto; padding-right: 113px; height: 21px; }
.notes { gap: 4px; margin-right: 20px; }
.comments { gap: 2px; margin-right: 19px; }
.view { justify-content: center; width: 40px; }
.ime {
  position: absolute;
  top: 0;
  right: 0;
  bottom: 0;
  display: flex;
  align-items: center;
  gap: 8px;
  width: 115px;
  background: #fafafa;
  color: #2f74b5;
  font-size: 15px;
  font-weight: 700;
}
.ime .sogou { margin: -4px -4px -4px 0; z-index: 2; }

/* Task bar */
.taskbar { display: flex; height: 40px; padding-left: 4px; background: linear-gradient(90deg, #22373d 0%, #20343c 50%, #1a2740 85%, #1b2440 100%); color: #e0e4e6; }
.deskname { width: 45px; padding-top: 11px; font-size: 13px; }
.launchers { display: flex; justify-content: space-between; align-items: center; width: 155px; height: 31px; }
.more { width: 52px; padding-left: 29px; font-size: 16px; line-height: 16px; }
.apps { display: flex; gap: 5px; }
.app { justify-content: center; width: 40px; border-bottom: 2px solid #76b1dc; }
.app.on { width: 48px; background: #4e5e64; }
.tray { display: flex; align-items: center; margin-left: auto; }
.tray svg { margin-right: 9px; }
.clock { width: 26px; padding-left: 2px; overflow: hidden; line-height: 19px; }
.clock span { display: block; }
.clock .time { padding-left: 14px; }
```
